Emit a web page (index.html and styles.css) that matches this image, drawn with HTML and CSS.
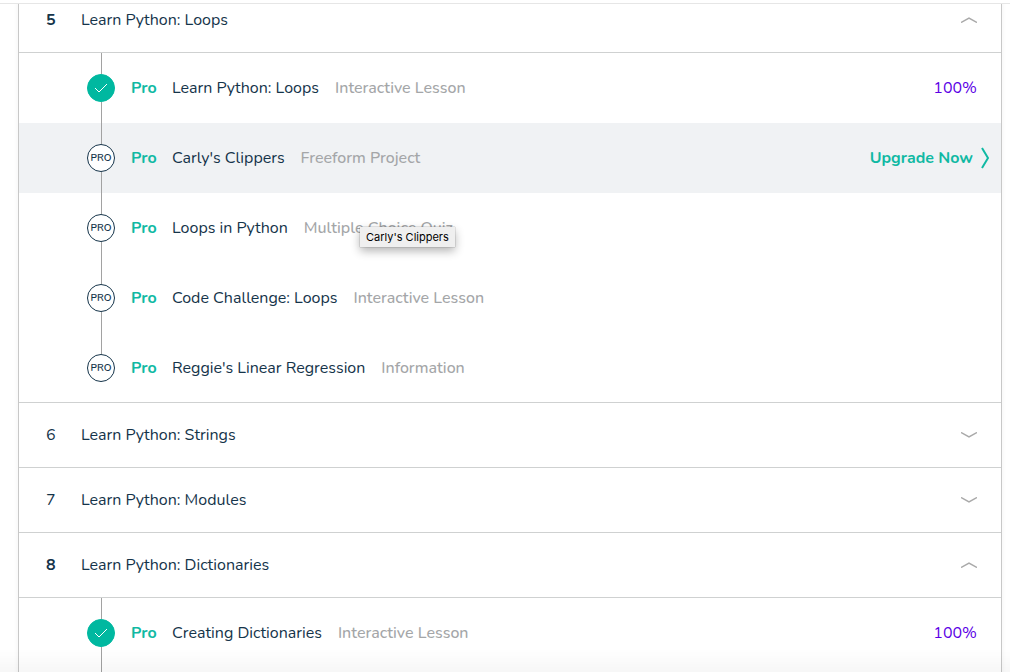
FILE: index.html
```html
<!DOCTYPE html>
<html lang="en">
<head>
<meta charset="utf-8">
<title>Learn Python</title>
<link rel="stylesheet" href="styles.css">
</head>
<body>
<div class="topbar"></div>
<main class="viewport">
  <div class="syllabus">
    <section class="module">
      <button class="module-header open" type="button" aria-expanded="true">
        <span class="number">5</span><span class="name">Learn Python: Loops</span>
        <svg class="chevron" viewBox="0 0 16 6" aria-hidden="true"><path d="M0 5.5 8 1l8 4.5"/></svg>
      </button>
      <ul class="lessons">
        <li><a class="lesson" href="#"><span class="track"><span class="badge done"><svg class="check" viewBox="0 0 14 10" aria-label="Completed"><path d="M1 5l4 4 8-8"/></svg></span></span><span class="pro">Pro</span><span class="title">Learn Python: Loops</span><span class="type">Interactive Lesson</span><span class="percent">100%</span></a></li>
        <li><a class="lesson active" href="#"><span class="track"><span class="badge">PRO</span></span><span class="pro">Pro</span><span class="title">Carly's Clippers</span><span class="type">Freeform Project</span><span class="upgrade">Upgrade Now<svg class="arrow" viewBox="0 0 8 22" aria-hidden="true"><path d="M1 1l6 10-6 10"/></svg></span></a></li>
        <li class="with-tooltip"><a class="lesson" href="#"><span class="track"><span class="badge">PRO</span></span><span class="pro">Pro</span><span class="title">Loops in Python</span><span class="type">Multiple Choice Quiz</span></a><span class="tooltip" role="tooltip">Carly's Clippers</span></li>
        <li><a class="lesson" href="#"><span class="track"><span class="badge">PRO</span></span><span class="pro">Pro</span><span class="title">Code Challenge: Loops</span><span class="type">Interactive Lesson</span></a></li>
        <li><a class="lesson last" href="#"><span class="track"><span class="badge">PRO</span></span><span class="pro">Pro</span><span class="title">Reggie's Linear Regression</span><span class="type">Information</span></a></li>
      </ul>
    </section>
    <section class="module">
      <button class="module-header" type="button" aria-expanded="false">
        <span class="number">6</span><span class="name">Learn Python: Strings</span>
        <svg class="chevron" viewBox="0 0 16 6" aria-hidden="true"><path d="M0 .5 8 5l8-4.5"/></svg>
      </button>
    </section>
    <section class="module">
      <button class="module-header" type="button" aria-expanded="false">
        <span class="number">7</span><span class="name">Learn Python: Modules</span>
        <svg class="chevron" viewBox="0 0 16 6" aria-hidden="true"><path d="M0 .5 8 5l8-4.5"/></svg>
      </button>
    </section>
    <section class="module">
      <button class="module-header open" type="button" aria-expanded="true">
        <span class="number">8</span><span class="name">Learn Python: Dictionaries</span>
        <svg class="chevron" viewBox="0 0 16 6" aria-hidden="true"><path d="M0 5.5 8 1l8 4.5"/></svg>
      </button>
      <ul class="lessons">
        <li><a class="lesson" href="#"><span class="track"><span class="badge done"><svg class="check" viewBox="0 0 14 10" aria-label="Completed"><path d="M1 5l4 4 8-8"/></svg></span></span><span class="pro">Pro</span><span class="title">Creating Dictionaries</span><span class="type">Interactive Lesson</span><span class="percent">100%</span></a></li>
        <li class="lesson" aria-hidden="true"><span class="track"></span></li>
      </ul>
    </section>
  </div>
</main>
<div class="bottom-shade"></div>
</body>
</html>
```

FILE: styles.css
```css
* { box-sizing: border-box; }
body {
  margin: 0;
  height: 100vh;
  display: flex;
  flex-direction: column;
  overflow: hidden;
  background: #fff;
  color: #15344a;
  font: 16px/24px Nunito, "Noto Sans", sans-serif;
}
.topbar {
  flex: none;
  height: 4px;
  border-bottom: 1px solid #e6e6e6;
}
.viewport {
  flex: 1;
  min-height: 0;
  overflow: hidden;
  display: flex;
  flex-direction: column;
}
.syllabus {
  flex: none;
  margin: -16px 8px 0 18px;
  border: 1px solid #c8c8c8;
  border-top: 0;
  box-shadow: 0 0 6px rgba(0, 0, 0, .05);
}
.module-header {
  display: flex;
  align-items: center;
  width: 100%;
  height: 65px;
  padding: 0 24px 0 27px;
  border: 0;
  border-bottom: 1px solid #cfd1d1;
  background: none;
  color: inherit;
  font: inherit;
  text-align: left;
}
.number { width: 35px; }
.open .number { font-weight: 700; }
.name { flex: 1; }
.chevron { width: 16px; height: 6px; }
.chevron path { fill: none; stroke: #a9a9a9; stroke-width: 1.5; }
.lessons { margin: 0; padding: 0; list-style: none; }
.lesson {
  display: flex;
  align-items: center;
  gap: 16px;
  height: 70px;
  padding: 0 24px 0 68px;
  color: inherit;
  text-decoration: none;
}
.lesson.active { background: #f0f2f4; padding-right: 12px; }
.lesson.last { border-bottom: 1px solid #cfd1d1; }
.track {
  align-self: stretch;
  width: 28px;
  display: flex;
  flex-direction: column;
  align-items: center;
}
.track::before, .track::after {
  content: "";
  flex: 1;
  width: 1px;
  background: #a2a2a2;
}
.last .track::after { background: none; }
.badge {
  display: flex;
  align-items: center;
  justify-content: center;
  width: 28px;
  height: 28px;
  border: 1px solid #15344a;
  border-radius: 50%;
  background: #fff;
  font: 600 10px/12px Nunito, sans-serif;
}
.badge.done { border-color: #00b8a0; background: #00b8a0; }
.check { width: 14px; height: 10px; }
.check path { fill: none; stroke: #fff; stroke-width: 1; }
.pro { width: 25px; color: #10b9a3; font-weight: 700; }
.type { color: #a4a6a8; font-weight: 500; }
.percent { margin-left: auto; color: #5b00e5; }
.upgrade {
  display: flex;
  align-items: center;
  gap: 8px;
  margin-left: auto;
  color: #10b9a3;
  font-weight: 700;
}
.arrow { width: 8px; height: 22px; }
.arrow path { fill: none; stroke: currentColor; stroke-width: 2; }
.with-tooltip { position: relative; }
.tooltip {
  position: absolute;
  top: 34px;
  left: 341px;
  padding: 2px 6px;
  background: #efefef;
  color: #000;
  font: 11px/16px Inter, sans-serif;
  box-shadow: 0 0 1px rgba(0, 0, 0, .5), 0 4px 10px rgba(0, 0, 0, .3);
}
.bottom-shade {
  position: fixed;
  right: 0;
  bottom: 0;
  left: 0;
  height: 24px;
  background: linear-gradient(transparent, rgba(0, 0, 0, .03));
  pointer-events: none;
}
```
